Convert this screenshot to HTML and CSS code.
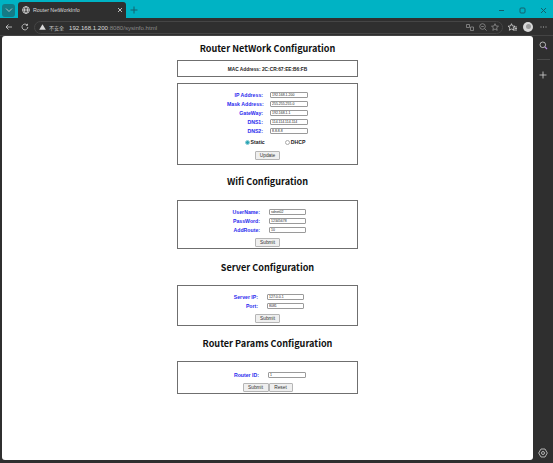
FILE: index.html
```html
<!DOCTYPE html>
<html lang="en">
<head>
<meta charset="utf-8">
<title>Router NetWorkInfo</title>
<link rel="stylesheet" href="styles.css">
</head>
<body>
<header class="tabbar">
  <div class="tab-menu"><svg width="8" height="6" viewBox="0 0 8 6"><path d="M1 1.5 4 4.5 7 1.5" class="ic"/></svg></div>
  <div class="tab">
    <svg width="8" height="8" viewBox="0 0 8 8"><circle cx="4" cy="4" r="3.4" class="ic-w"/><ellipse cx="4" cy="4" rx="1.5" ry="3.4" class="ic-w"/><path d="M.6 4h6.8" class="ic-w"/></svg>
    <span class="tab-title">Router NetWorkInfo</span>
    <svg class="tab-close" width="6" height="6" viewBox="0 0 6 6"><path d="M1 1 5 5M5 1 1 5" class="ic-w"/></svg>
  </div>
  <svg class="new-tab" width="8" height="8" viewBox="0 0 8 8"><path d="M4 .5v7M.5 4h7" class="ic-dark"/></svg>
  <div class="win">
    <svg width="7" height="7" viewBox="0 0 7 7"><path d="M1 3.5h5" class="ic-dark"/></svg>
    <svg width="7" height="7" viewBox="0 0 7 7"><rect x="1" y="1" width="5" height="5" rx="1" class="ic-dark"/></svg>
    <svg width="7" height="7" viewBox="0 0 7 7"><path d="M1 1 6 6M6 1 1 6" class="ic-dark"/></svg>
  </div>
</header>
<nav class="toolbar">
  <svg width="8" height="8" viewBox="0 0 8 8"><path d="M7 4H1M3.5 1.5 1 4l2.5 2.5" class="ic"/></svg>
  <svg class="reload" width="8" height="8" viewBox="0 0 8 8"><path d="M6.8 4A2.9 2.9 0 1 1 6 2M6.5.8V2.4H4.9" class="ic"/></svg>
  <div class="address">
    <svg width="7" height="6" viewBox="0 0 7 6"><path d="M3.5 .3 6.8 5.7H.2Z" fill="#d8d8d8"/></svg>
    <span class="insecure">不安全</span>
    <span class="url"><span class="host">192.168.1.200</span>:8080/sysinfo.html</span>
    <div class="addr-icons">
      <svg width="8" height="8" viewBox="0 0 8 8"><path d="M.5 1.5h3v3h-3ZM4.500 4h3v3.500h-3Z" class="ic-dim"/></svg>
      <svg width="8" height="8" viewBox="0 0 8 8"><circle cx="3.500" cy="3.500" r="2.800" class="ic-dim"/><path d="M5.600 5.600 7.600 7.600M2.200 3.500h2.600" class="ic-dim"/></svg>
      <svg width="8" height="8" viewBox="0 0 8 8"><path d="M4 .7 5 3l2.500.2-1.900 1.600.6 2.500L4 6 1.800 7.300l.6-2.500L.5 3.200 3 3Z" class="ic-dim"/></svg>
    </div>
  </div>
  <svg class="fav" width="9" height="8" viewBox="0 0 9 8"><path d="M3.500.7 4.500 3l2.500.2-1.900 1.600.6 2.500L3.500 6 1.300 7.300l.6-2.500L0 3.200 2.500 3ZM6 4h3M6.500 5.500H9M6 7h3" class="ic"/></svg>
  <div class="avatar"><span class="avatar-head"></span></div>
  <svg class="more" width="7" height="2" viewBox="0 0 7 2"><path d="M.5 1h1M3 1h1M5.500 1h1" class="ic"/></svg>
</nav>
<div class="workspace">
  <main class="page">
    <h1>Router NetWork Configuration</h1>
    <section class="panel panel-mac"><p class="mac">MAC Address: 2C:CR:67:EE:B6:FB</p></section>
    <section class="panel panel-net">
      <div class="fields fields-net">
        <label>IP Address:</label><input value="192.168.1.200">
        <label>Mask Address:</label><input value="255.255.255.0">
        <label>GateWay:</label><input value="192.168.1.1">
        <label>DNS1:</label><input value="114.114.114.114">
        <label>DNS2:</label><input value="8.8.8.8">
      </div>
      <div class="radios">
        <span class="radio-item"><span class="radio radio-on"></span>Static</span>
        <span class="radio-item"><span class="radio"></span>DHCP</span>
      </div>
      <div class="actions"><button>Update</button></div>
    </section>
    <h1 class="h-wifi">Wifi Configuration</h1>
    <section class="panel panel-wifi">
      <div class="fields fields-wifi">
        <label>UserName:</label><input value="sdnet02">
        <label>PassWord:</label><input value="12345678">
        <label>AddRoute:</label><input value="10">
      </div>
      <div class="actions"><button>Submit</button></div>
    </section>
    <h1 class="h-server">Server Configuration</h1>
    <section class="panel panel-server">
      <div class="fields fields-server">
        <label>Server IP:</label><input value="127.0.0.1">
        <label>Port:</label><input value="8081">
      </div>
      <div class="actions"><button>Submit</button></div>
    </section>
    <h1 class="h-params">Router Params Configuration</h1>
    <section class="panel panel-params">
      <div class="fields fields-params">
        <label>Router ID:</label><input value="1">
      </div>
      <div class="actions actions-tight"><button>Submit</button><button>Reset</button></div>
    </section>
  </main>
  <aside class="sidebar">
    <svg width="9" height="9" viewBox="0 0 9 9"><circle cx="3.800" cy="3.800" r="2.800" class="ic"/><path d="M5.800 5.800 8 8" stroke="#b58ae0" stroke-width="1.200" fill="none"/></svg>
    <span class="side-sep"></span>
    <svg width="8" height="8" viewBox="0 0 8 8"><path d="M4 .5v7M.5 4h7" class="ic"/></svg>
    <svg class="side-gear" width="10" height="10" viewBox="0 0 10 10"><path d="M3 1h4l2.300 4L7 9H3L.7 5Z" class="ic"/><circle cx="5" cy="5" r="1.500" class="ic"/></svg>
  </aside>
</div>
</body>
</html>
```
FILE: styles.css
```css
* { box-sizing: border-box; }
html, body { margin: 0; height: 100%; }
body {
  display: flex;
  flex-direction: column;
  height: 463px;
  overflow: hidden;
  background: #2f2f2f;
  font-family: "Liberation Sans", Arial, sans-serif;
}
.ic, .ic-w, .ic-dark, .ic-dim { fill: none; stroke-width: .8; }
.ic { stroke: #d4d4d4; }
.ic-w { stroke: #e6e6e6; }
.ic-dark { stroke: #14606c; stroke-width: 1; }
.ic-dim { stroke: #8f8f8f; }

.tabbar {
  height: 18px;
  flex: none;
  display: flex;
  align-items: center;
  background: #00b3c4;
  padding: 2px 0 0 2px;
}
.tab-menu {
  width: 13px;
  height: 13px;
  border-radius: 3px;
  background: #147b86;
  display: flex;
  align-items: center;
  justify-content: center;
}
.tab {
  align-self: flex-end;
  width: 108px;
  height: 16px;
  margin-left: 3px;
  padding: 0 3px 0 4px;
  border-radius: 3px 3px 0 0;
  background: #2f2f2f;
  display: flex;
  align-items: center;
  gap: 3px;
}
.tab-title { flex: 1; color: #d8d8d8; font-size: 5.300px; white-space: nowrap; }
.new-tab { margin-left: 4px; }
.win { margin-left: auto; margin-right: 6px; display: flex; gap: 14px; }

.toolbar {
  height: 18px;
  flex: none;
  display: flex;
  align-items: center;
  padding: 1px 6px 0 5px;
  border-bottom: 1px solid #444;
  background: #2f2f2f;
}
.reload { margin-left: 8px; }
.address {
  flex: 1;
  height: 13px;
  margin-left: 5px;
  padding: 0 3px 0 4px;
  border: 1px solid #454545;
  border-radius: 7px;
  display: flex;
  align-items: center;
}
.insecure { margin-left: 3px; color: #c8c8c8; font: 5px "Noto Sans CJK SC", sans-serif; }
.url { margin-left: 5px; color: #8b8b8b; font-size: 6.100px; white-space: nowrap; }
.host { color: #dcdcdc; }
.addr-icons { margin-left: auto; display: flex; gap: 4.500px; }
.fav { margin-left: 5px; }
.avatar {
  width: 10px;
  height: 10px;
  margin-left: 6px;
  border-radius: 50%;
  background: #d8d8d8;
  overflow: hidden;
  display: flex;
  justify-content: center;
}
.avatar-head { width: 5px; height: 5px; margin-top: 2px; border-radius: 50%; background: #9c9c9c; }
.more { margin-left: 7px; }

.workspace { flex: 1; min-height: 0; display: flex; padding: 0 0 3px 2px; }
.page {
  width: 531px;
  flex: none;
  padding: 6px 0 0;
  background: #fff;
  border-radius: 3px;
  display: flex;
  flex-direction: column;
  align-items: center;
}
h1 {
  margin: 0;
  height: 13px;
  color: #111;
  font: 700 9.100px/13px "Noto Sans CJK SC", "Noto Sans", sans-serif;
  white-space: nowrap;
}
.h-wifi { margin-top: 10px; }
.h-server { margin-top: 12px; }
.h-params { margin-top: 11px; }
.panel {
  width: 181px;
  margin-top: 5px;
  border: 1px solid #6f6f6f;
  display: flex;
  flex-direction: column;
  align-items: center;
}
.panel-mac { height: 17px; justify-content: center; margin-bottom: 1px; }
.panel-net { height: 82px; padding-top: 8px; }
.panel-wifi { height: 49px; margin-top: 12px; padding-top: 8px; }
.panel-server { height: 41px; margin-top: 11px; padding-top: 8px; }
.panel-params { height: 33px; margin-top: 11px; padding-top: 10px; }
.mac { margin: 2px 0 0; color: #222; font-size: 4.800px; font-weight: 700; }
.fields { display: grid; row-gap: 3px; align-items: center; }
.fields-net { grid-template-columns: 36px 38px; column-gap: 7px; }
.fields-wifi { grid-template-columns: 31px 37px; column-gap: 9px; }
.fields-server { grid-template-columns: 27px 37px; column-gap: 9px; }
.fields-params { grid-template-columns: 30px 38px; column-gap: 9px; }
label {
  color: #2a2aee;
  font-size: 5.200px;
  font-weight: 700;
  line-height: 6px;
  text-align: right;
  white-space: nowrap;
}
input {
  width: 100%;
  height: 6px;
  margin: 0;
  padding: 0 1px;
  border: 1px solid #9a9a9a;
  border-radius: 1px;
  background: #fff;
  color: #222;
  font: 3.500px "Liberation Sans", sans-serif;
  outline: 0;
}
.radios { margin-top: 5px; display: flex; gap: 20px; margin-left: 15px; }
.radio-item { display: flex; align-items: center; gap: 1px; color: #222; font-size: 5.200px; font-weight: 700; line-height: 6px; }
.radio { width: 5px; height: 5px; border: .5px solid #aaa; border-radius: 50%; background: #fff; }
.radio-on { background: #2ba5b5; border-color: #8fd0d8; }
.actions { margin-top: 6px; display: flex; justify-content: center; }
.panel-wifi .actions, .panel-server .actions { margin-top: 5px; }
.actions-tight { margin-top: 5px; }
button {
  width: 25px;
  height: 9px;
  margin: 0;
  padding: 0;
  border: 1px solid #b5b5b5;
  border-radius: 1px;
  background: #efefef;
  color: #333;
  font: 4.800px "Liberation Sans", sans-serif;
}
.actions-tight button { width: 26px; }
.actions-tight button + button { width: 24px; }

.sidebar {
  flex: 1;
  padding-top: 5px;
  display: flex;
  flex-direction: column;
  align-items: center;
}
.side-sep { width: 13px; height: 1px; margin: 9px 0 11px; background: #4a4a4a; }
.side-gear { margin-top: auto; margin-bottom: 2px; }
```
